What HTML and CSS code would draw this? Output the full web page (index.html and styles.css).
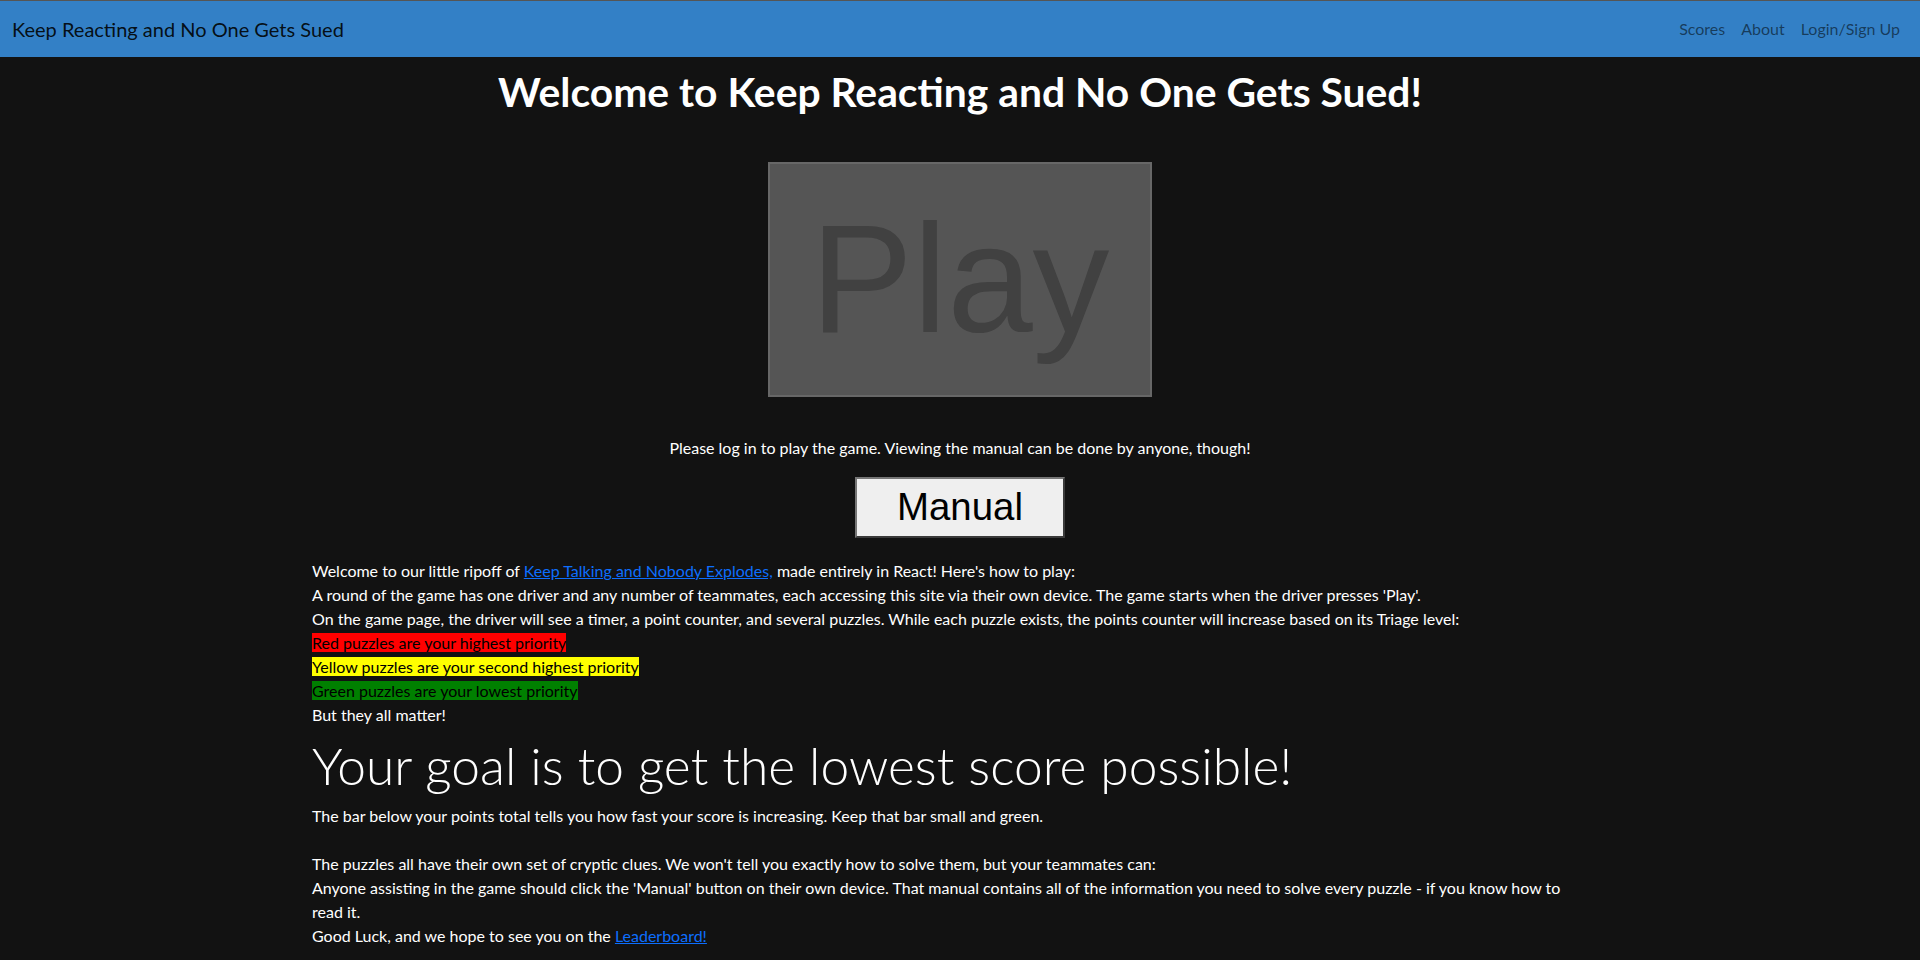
FILE: index.html
```html
<!DOCTYPE html>
<html lang="en">
<head>
<meta charset="utf-8">
<title>Keep Reacting and No One Gets Sued</title>
<link rel="stylesheet" href="styles.css">
</head>
<body>
<nav class="navbar">
  <a class="brand" href="#">Keep Reacting and No One Gets Sued</a>
  <ul class="nav-links">
    <li><a href="#">Scores</a></li>
    <li><a href="#">About</a></li>
    <li><a href="#">Login/Sign Up</a></li>
  </ul>
</nav>
<main class="container">
  <h1 class="title">Welcome to Keep Reacting and No One Gets Sued!</h1>
  <div class="center-row play-row">
    <button class="play-btn" disabled>Play</button>
  </div>
  <p class="login-note">Please log in to play the game. Viewing the manual can be done by anyone, though!</p>
  <div class="center-row manual-row">
    <button class="manual-btn">Manual</button>
  </div>
  <div class="rules">
    <div>Welcome to our little ripoff of <a href="#">Keep Talking and Nobody Explodes,</a> made entirely in React! Here's how to play:</div>
    <div>A round of the game has one driver and any number of teammates, each accessing this site via their own device. The game starts when the driver presses 'Play'.</div>
    <div>On the game page, the driver will see a timer, a point counter, and several puzzles. While each puzzle exists, the points counter will increase based on its Triage level:</div>
    <div><span class="tag tag-red">Red puzzles are your highest priority</span></div>
    <div><span class="tag tag-yellow">Yellow puzzles are your second highest priority</span></div>
    <div><span class="tag tag-green">Green puzzles are your lowest priority</span></div>
    <div>But they all matter!</div>
  </div>
  <h2 class="goal">Your goal is to get the lowest score possible!</h2>
  <div class="rules">
    <div>The bar below your points total tells you how fast your score is increasing. Keep that bar small and green.</div>
    <div class="blank">&nbsp;</div>
    <div>The puzzles all have their own set of cryptic clues. We won't tell you exactly how to solve them, but your teammates can:</div>
    <div>Anyone assisting in the game should click the 'Manual' button on their own device. That manual contains all of the information you need to solve every puzzle - if you know how to<br>read it.</div>
    <div>Good Luck, and we hope to see you on the <a href="#">Leaderboard!</a></div>
  </div>
</main>
</body>
</html>
```
FILE: styles.css
```css
* { box-sizing: border-box; }
html, body { margin: 0; padding: 0; }
body {
  background: #121212;
  color: #ffffff;
  font-family: Lato, "Open Sans", sans-serif;
  font-size: 16px;
  line-height: 1.5;
  overflow: hidden;
}
a { color: #0d6efd; }

.navbar {
  display: flex;
  align-items: center;
  justify-content: space-between;
  height: 57px;
  border-top: 1px solid #555555;
  background: #3380c6;
  padding: 0 12px;
}
.brand {
  font-size: 20px;
  line-height: 30px;
  color: rgba(0, 0, 0, 0.9);
  text-decoration: none;
}
.nav-links {
  display: flex;
  list-style: none;
  margin: 0;
  padding: 0;
}
.nav-links a {
  display: block;
  padding: 8px;
  color: rgba(0, 0, 0, 0.55);
  text-decoration: none;
}

.container {
  width: 1320px;
  margin: 0 auto;
  padding: 0 12px;
}
.title {
  margin: 11px 0 0;
  text-align: center;
  font-size: 40.8px;
  font-weight: 700;
  line-height: 48px;
}
.center-row {
  display: flex;
  justify-content: center;
}
.play-row { margin-top: 46px; }
.play-btn {
  width: 384px;
  height: 235px;
  display: flex;
  align-items: center;
  justify-content: center;
  padding: 0;
  background: #555555;
  border: 2px solid #676767;
  color: #414141;
  font-family: "Liberation Sans", Arial, sans-serif;
  font-size: 153.6px;
  line-height: 1.15;
}
.login-note {
  margin: 39px 0 0;
  text-align: center;
}
.manual-row { margin-top: 17px; }
.manual-btn {
  width: 210px;
  height: 61px;
  padding: 0;
  background: #efefef;
  border: 2px solid;
  border-color: #767676 #3a3a3a #3a3a3a #767676;
  color: #000000;
  font-family: "Liberation Sans", Arial, sans-serif;
  font-size: 38.4px;
  line-height: 1.15;
}
.rules { margin-top: 21px; }
.tag { color: #000000; }
.tag-red { background: #ff0000; }
.tag-yellow { background: #ffff00; }
.tag-green { background: #008000; }
.goal {
  margin: 8px 0 9px;
  font-size: 51.5px;
  font-weight: 300;
  line-height: 60px;
}
.goal + .rules { margin-top: 0; }
```
